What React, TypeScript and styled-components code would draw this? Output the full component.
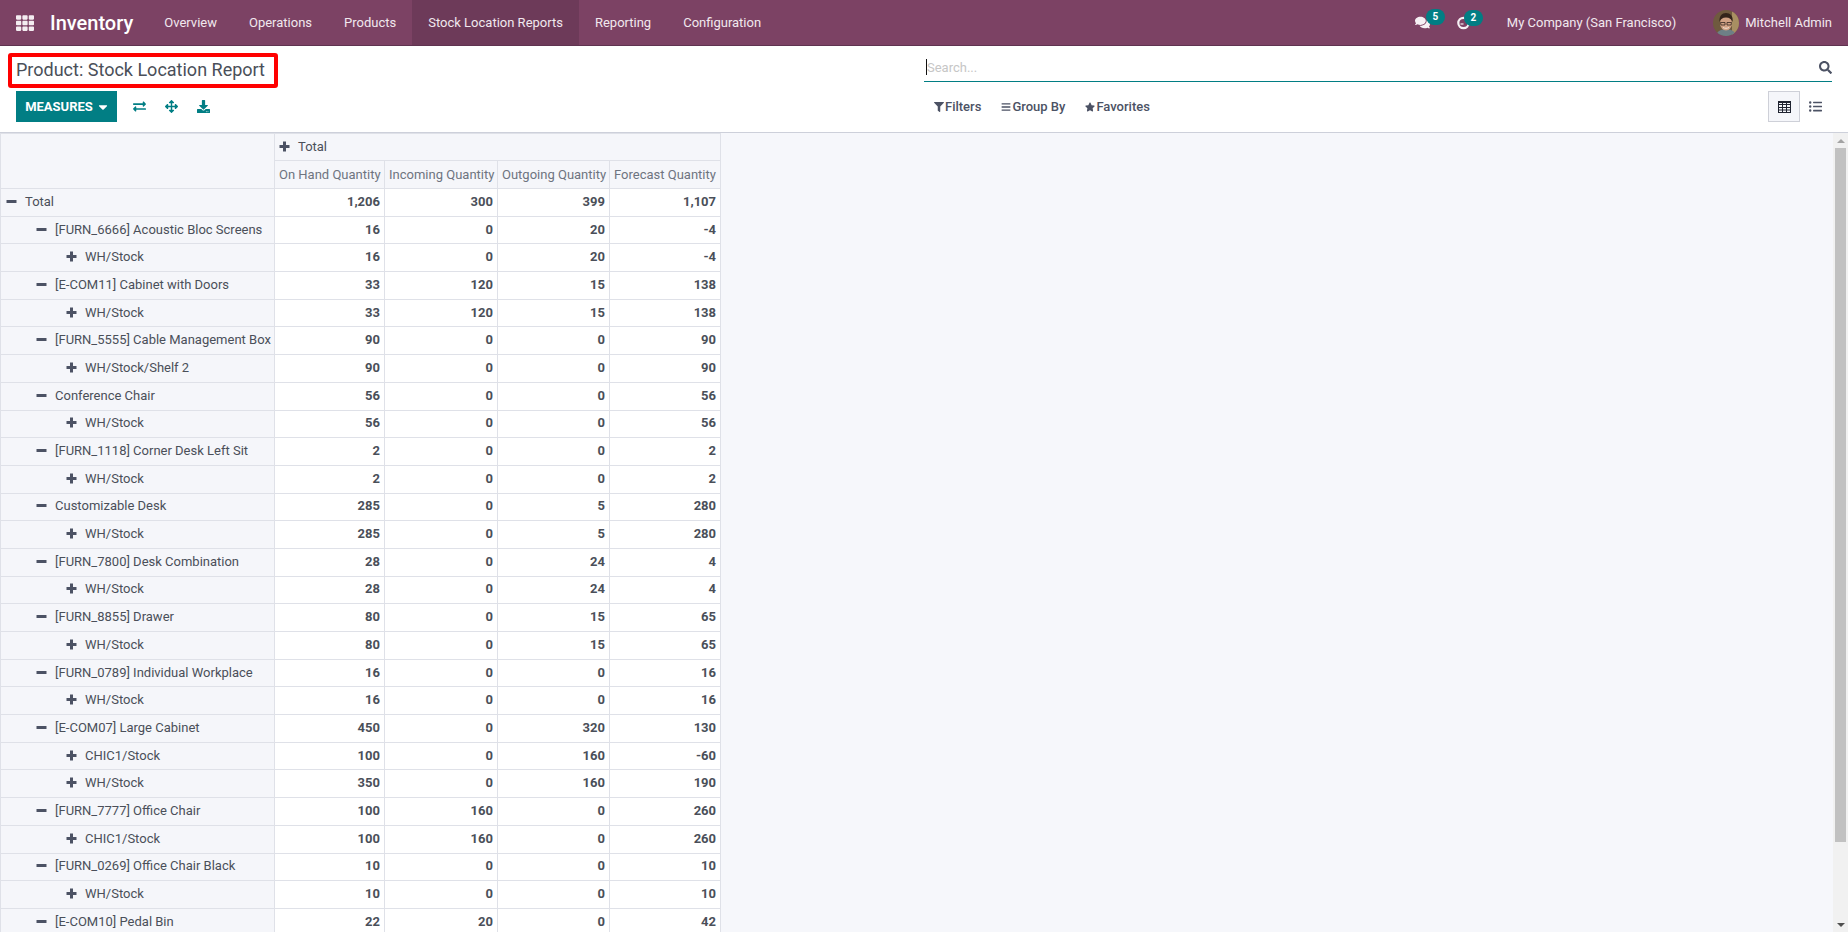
import React from 'react';
import styled, { createGlobalStyle } from 'styled-components';
import {
  FaCaretDown,
  FaComments,
  FaDownload,
  FaExchangeAlt,
  FaFilter,
  FaListUl,
  FaSearch,
  FaStar,
  FaTh,
  FaArrowsAlt,
  FaBars,
} from 'react-icons/fa';

const TEAL = '#017e84';
const INK = '#4c5264';

const GlobalStyle = createGlobalStyle`
  html, body, #root { height: 100%; margin: 0; }
  body {
    font-family: Roboto, "Noto Sans", sans-serif;
    font-size: 13px;
    color: #4c4c4c;
    overflow: hidden;
  }
`;

type Row = { level: number; open: boolean; label: string; values: string[] };

const row = (level: number, label: string, a: string, b: string, c: string, d: string): Row => ({
  level,
  open: level < 2,
  label,
  values: [a, b, c, d],
});

const rows: Row[] = [
  row(0, 'Total', '1,206', '300', '399', '1,107'),
  row(1, '[FURN_6666] Acoustic Bloc Screens', '16', '0', '20', '-4'),
  row(2, 'WH/Stock', '16', '0', '20', '-4'),
  row(1, '[E-COM11] Cabinet with Doors', '33', '120', '15', '138'),
  row(2, 'WH/Stock', '33', '120', '15', '138'),
  row(1, '[FURN_5555] Cable Management Box', '90', '0', '0', '90'),
  row(2, 'WH/Stock/Shelf 2', '90', '0', '0', '90'),
  row(1, 'Conference Chair', '56', '0', '0', '56'),
  row(2, 'WH/Stock', '56', '0', '0', '56'),
  row(1, '[FURN_1118] Corner Desk Left Sit', '2', '0', '0', '2'),
  row(2, 'WH/Stock', '2', '0', '0', '2'),
  row(1, 'Customizable Desk', '285', '0', '5', '280'),
  row(2, 'WH/Stock', '285', '0', '5', '280'),
  row(1, '[FURN_7800] Desk Combination', '28', '0', '24', '4'),
  row(2, 'WH/Stock', '28', '0', '24', '4'),
  row(1, '[FURN_8855] Drawer', '80', '0', '15', '65'),
  row(2, 'WH/Stock', '80', '0', '15', '65'),
  row(1, '[FURN_0789] Individual Workplace', '16', '0', '0', '16'),
  row(2, 'WH/Stock', '16', '0', '0', '16'),
  row(1, '[E-COM07] Large Cabinet', '450', '0', '320', '130'),
  row(2, 'CHIC1/Stock', '100', '0', '160', '-60'),
  row(2, 'WH/Stock', '350', '0', '160', '190'),
  row(1, '[FURN_7777] Office Chair', '100', '160', '0', '260'),
  row(2, 'CHIC1/Stock', '100', '160', '0', '260'),
  row(1, '[FURN_0269] Office Chair Black', '10', '0', '0', '10'),
  row(2, 'WH/Stock', '10', '0', '0', '10'),
  row(1, '[E-COM10] Pedal Bin', '22', '20', '0', '42'),
];

const measures = ['On Hand Quantity', 'Incoming Quantity', 'Outgoing Quantity', 'Forecast Quantity'];
const menus = ['Overview', 'Operations', 'Products', 'Stock Location Reports', 'Reporting', 'Configuration'];

const Page = styled.div`
  height: 932px;
  display: flex;
  flex-direction: column;
`;

const Navbar = styled.header`
  height: 46px;
  flex: none;
  box-sizing: border-box;
  display: flex;
  align-items: stretch;
  background: #7c4264;
  border-bottom: 1px solid #5f3350;
  color: #f1e8ee;
`;

const AppsIcon = styled.span`
  display: flex;
  align-items: center;
  padding-left: 16px;
  font-size: 18px;
  color: #f4edf1;
`;

const Brand = styled.span`
  display: flex;
  align-items: center;
  padding: 0 15px 0 16px;
  font-size: 20px;
  font-weight: 500;
  color: #fff;
`;

const Menu = styled.a<{ $active?: boolean }>`
  display: flex;
  align-items: center;
  padding: 0 16px;
  background: ${({ $active }) => ($active ? '#6d3a59' : 'transparent')};
`;

const Systray = styled.div`
  margin-left: auto;
  display: flex;
  align-items: center;
  padding-right: 16px;
`;

const TrayIcon = styled.span<{ $gap: number }>`
  position: relative;
  display: flex;
  align-items: center;
  font-size: 15px;
  margin-right: ${({ $gap }) => $gap}px;
  color: #f6f0f4;
`;

const Badge = styled.span<{ $left: number }>`
  position: absolute;
  left: ${({ $left }) => $left}px;
  top: -6px;
  width: 19px;
  height: 16px;
  border-radius: 8px;
  background: ${TEAL};
  color: #fff;
  font-size: 10px;
  font-weight: 700;
  line-height: 15px;
  text-align: center;
`;

const Company = styled.span`
  margin-right: 37px;
`;

const Avatar = styled.svg`
  width: 26px;
  height: 26px;
  border-radius: 50%;
  margin-right: 6px;
`;

const ControlPanel = styled.section`
  height: 87px;
  flex: none;
  box-sizing: border-box;
  display: grid;
  grid-template-columns: 924px 1fr;
  padding-right: 16px;
  background: #fff;
  border-bottom: 1px solid #cdd0da;
`;

const LeftPanel = styled.div`
  position: relative;
  padding-left: 16px;
`;

const Title = styled.h1`
  margin: 0;
  height: 45px;
  display: flex;
  align-items: center;
  padding-top: 1px;
  box-sizing: border-box;
  font-size: 18px;
  font-weight: 400;
  color: #4a4f59;
`;

const Highlight = styled.div`
  position: absolute;
  left: 8px;
  top: 7px;
  width: 270px;
  height: 35px;
  box-sizing: border-box;
  border: 4px solid #f00;
  border-radius: 3px;
`;

const Actions = styled.div`
  display: flex;
  align-items: center;
  height: 31px;
`;

const MeasuresButton = styled.button`
  height: 31px;
  width: 101px;
  padding: 0 0 0 2px;
  margin-right: 6px;
  display: flex;
  align-items: center;
  justify-content: center;
  gap: 3px;
  border: 0;
  background: ${TEAL};
  color: #fff;
  font: 700 13px Roboto, sans-serif;
  svg {
    font-size: 14px;
  }
`;

const ActionIcon = styled.span`
  display: flex;
  justify-content: center;
  width: 32px;
  font-size: 13px;
  color: ${TEAL};
`;

const RightPanel = styled.div`
  display: flex;
  flex-direction: column;
`;

const SearchBar = styled.div`
  height: 36px;
  box-sizing: border-box;
  display: flex;
  align-items: center;
  padding: 7px 0 0 2px;
  border-bottom: 1px solid ${TEAL};
`;

const Caret = styled.span`
  width: 1px;
  height: 16px;
  flex: none;
  background: #111;
`;

const SearchInput = styled.input`
  flex: 1;
  border: 0;
  outline: 0;
  padding: 0;
  font: 13px Roboto, sans-serif;
  &::placeholder {
    color: #c6c6c6;
  }
`;

const SearchIcon = styled.span`
  display: flex;
  font-size: 13px;
  color: ${INK};
`;

const FilterRow = styled.div`
  display: flex;
  align-items: center;
  height: 31px;
  margin-top: 9px;
  padding-left: 10px;
`;

const FilterButton = styled.span`
  display: flex;
  align-items: center;
  gap: 1px;
  margin-right: 20px;
  font-weight: 500;
  color: ${INK};
  font-size: 13px;
  svg {
    font-size: 10px;
  }
`;

const ViewSwitch = styled.div`
  margin-left: auto;
  display: flex;
`;

const ViewButton = styled.span<{ $active?: boolean }>`
  width: 32px;
  height: 31px;
  box-sizing: border-box;
  display: flex;
  align-items: center;
  justify-content: center;
  padding-right: ${({ $active }) => ($active ? 0 : 2)}px;
  font-size: 13px;
  color: ${({ $active }) => ($active ? '#1f2330' : INK)};
  background: ${({ $active }) => ($active ? '#f5f6fa' : 'transparent')};
  border: 1px solid ${({ $active }) => ($active ? '#ced0d8' : 'transparent')};
`;

const Content = styled.main`
  position: relative;
  flex: 1;
  min-height: 0;
  overflow: hidden;
  background: #f6f7fb;
`;

const Pivot = styled.table`
  table-layout: fixed;
  width: 720px;
  border-collapse: collapse;
  font-size: 13px;
  color: #4a4f59;
`;

const HeadCell = styled.th<{ $muted?: boolean }>`
  height: ${({ $muted }) => ($muted ? '28px' : '27px')};
  box-sizing: border-box;
  padding: 0 4px ${({ $muted }) => ($muted ? 0 : 2)}px;
  border: 1px solid #dfe1e8;
  background: #f5f6fa;
  font-weight: 400;
  text-align: left;
  white-space: nowrap;
  color: ${({ $muted }) => ($muted ? '#6e7480' : '#4a4f59')};
`;

const LabelCell = styled.td<{ $level: number }>`
  height: 27.7px;
  box-sizing: border-box;
  padding: 0 0 2px ${({ $level }) => 5 + $level * 30}px;
  border: 1px solid #dfe1e8;
  background: #f5f6fa;
  white-space: nowrap;
  overflow: hidden;
`;

const ValueCell = styled.td`
  height: 27.7px;
  box-sizing: border-box;
  padding: 0 4px 2px;
  border: 1px solid #dfe1e8;
  background: #fff;
  text-align: right;
  font-weight: 700;
`;

const Toggle = styled.svg`
  width: 11px;
  height: 11px;
  margin-right: 8px;
  vertical-align: -1px;
  fill: ${INK};
`;

const ScrollRail = styled.div`
  position: absolute;
  top: 0;
  right: 0;
  bottom: 0;
  width: 15px;
  display: flex;
  flex-direction: column;
  background: #f1f1f1;
`;

const ScrollArrow = styled.span<{ $down?: boolean }>`
  height: 15px;
  display: flex;
  align-items: center;
  justify-content: center;
  margin-top: ${({ $down }) => ($down ? 'auto' : 0)};
  &::before {
    content: '';
    border-left: 4px solid transparent;
    border-right: 4px solid transparent;
    border-top: ${({ $down }) => ($down ? '4px solid #505050' : '0')};
    border-bottom: ${({ $down }) => ($down ? '0' : '4px solid #a3a3a3')};
  }
`;

const ScrollThumb = styled.span`
  height: 694px;
  margin: 0 2px;
  background: #c1c1c1;
`;

const PlusIcon = () => (
  <Toggle viewBox="0 0 11 11">
    <path d="M4 .5h3v3.500h3.500v3H7v3.500H4V7H.5V4H4z" />
  </Toggle>
);

const MinusIcon = () => (
  <Toggle viewBox="0 0 11 11">
    <path d="M.5 4h10v3H.5z" />
  </Toggle>
);

const TableIcon = () => (
  <svg width="13" height="12" viewBox="0 0 13 12" fill="none" stroke="currentColor">
    <rect x="0.5" y="0.5" width="12" height="11" />
    <path d="M0 1.500h13M0 3.500h13M0 6.500h13M0 9h13M4.500 2v10M8.500 2v10" />
  </svg>
);

const ClockIcon = () => (
  <svg width="13" height="14" viewBox="0 0 13 14" fill="none" stroke="currentColor">
    <circle cx="6.5" cy="7" r="5.2" strokeWidth="2.200" />
    <path d="M3.500 8h3" strokeWidth="1.200" />
  </svg>
);

const Portrait = () => (
  <Avatar viewBox="0 0 26 26">
    <rect width="26" height="26" fill="#6f5a3e" />
    <rect x="19" width="7" height="26" fill="#a88f62" />
    <g style={{ filter: 'blur(0.5px)' }}>
      <path d="M3 26c1-5 5-7 10-7s9 2 10 7z" fill="#6d7f86" />
      <ellipse cx="13" cy="13" rx="6" ry="7.500" fill="#d0a184" />
      <path d="M6.500 12C6 6 9 3 13 3s7.500 3 6.500 9c-1-3-3-4.500-6.500-4.500S7.500 9 6.500 12z" fill="#33241b" />
      <path d="M7.500 12.500h4.500v2.500H8zM14 12.500h4.500l-.5 2.500h-4z" fill="none" stroke="#33261f" strokeWidth="0.800" />
      <path d="M10 17.500c1.500 1 4.500 1 6 0" fill="none" stroke="#f3e3d6" strokeWidth="1" />
    </g>
  </Avatar>
);

export default function App() {
  return (
    <Page>
      <GlobalStyle />
      <Navbar>
        <AppsIcon>
          <FaTh />
        </AppsIcon>
        <Brand>Inventory</Brand>
        {menus.map((menu) => (
          <Menu key={menu} $active={menu === 'Stock Location Reports'}>
            {menu}
          </Menu>
        ))}
        <Systray>
          <TrayIcon $gap={27}>
            <FaComments />
            <Badge $left={11}>5</Badge>
          </TrayIcon>
          <TrayIcon $gap={37}>
            <ClockIcon />
            <Badge $left={7}>2</Badge>
          </TrayIcon>
          <Company>My Company (San Francisco)</Company>
          <Portrait />
          <span>Mitchell Admin</span>
        </Systray>
      </Navbar>
      <ControlPanel>
        <LeftPanel>
          <Title>Product: Stock Location Report</Title>
          <Highlight />
          <Actions>
            <MeasuresButton>
              MEASURES
              <FaCaretDown />
            </MeasuresButton>
            <ActionIcon>
              <FaExchangeAlt />
            </ActionIcon>
            <ActionIcon>
              <FaArrowsAlt />
            </ActionIcon>
            <ActionIcon>
              <FaDownload />
            </ActionIcon>
          </Actions>
        </LeftPanel>
        <RightPanel>
          <SearchBar>
            <Caret />
            <SearchInput placeholder="Search..." />
            <SearchIcon>
              <FaSearch />
            </SearchIcon>
          </SearchBar>
          <FilterRow>
            <FilterButton>
              <FaFilter />
              Filters
            </FilterButton>
            <FilterButton>
              <FaBars />
              Group By
            </FilterButton>
            <FilterButton>
              <FaStar />
              Favorites
            </FilterButton>
            <ViewSwitch>
              <ViewButton $active>
                <TableIcon />
              </ViewButton>
              <ViewButton>
                <FaListUl />
              </ViewButton>
            </ViewSwitch>
          </FilterRow>
        </RightPanel>
      </ControlPanel>
      <Content>
        <Pivot>
          <colgroup>
            <col width="274" />
            <col width="110" />
            <col width="113" />
            <col width="112" />
            <col width="111" />
          </colgroup>
          <thead>
            <tr>
              <HeadCell rowSpan={2} />
              <HeadCell colSpan={4}>
                <PlusIcon />
                Total
              </HeadCell>
            </tr>
            <tr>
              {measures.map((measure) => (
                <HeadCell key={measure} $muted>
                  {measure}
                </HeadCell>
              ))}
            </tr>
          </thead>
          <tbody>
            {rows.map((item, index) => (
              <tr key={index}>
                <LabelCell $level={item.level}>
                  {item.open ? <MinusIcon /> : <PlusIcon />}
                  {item.label}
                </LabelCell>
                {item.values.map((value, column) => (
                  <ValueCell key={column}>{value}</ValueCell>
                ))}
              </tr>
            ))}
          </tbody>
        </Pivot>
        <ScrollRail>
          <ScrollArrow />
          <ScrollThumb />
          <ScrollArrow $down />
        </ScrollRail>
      </Content>
    </Page>
  );
}
